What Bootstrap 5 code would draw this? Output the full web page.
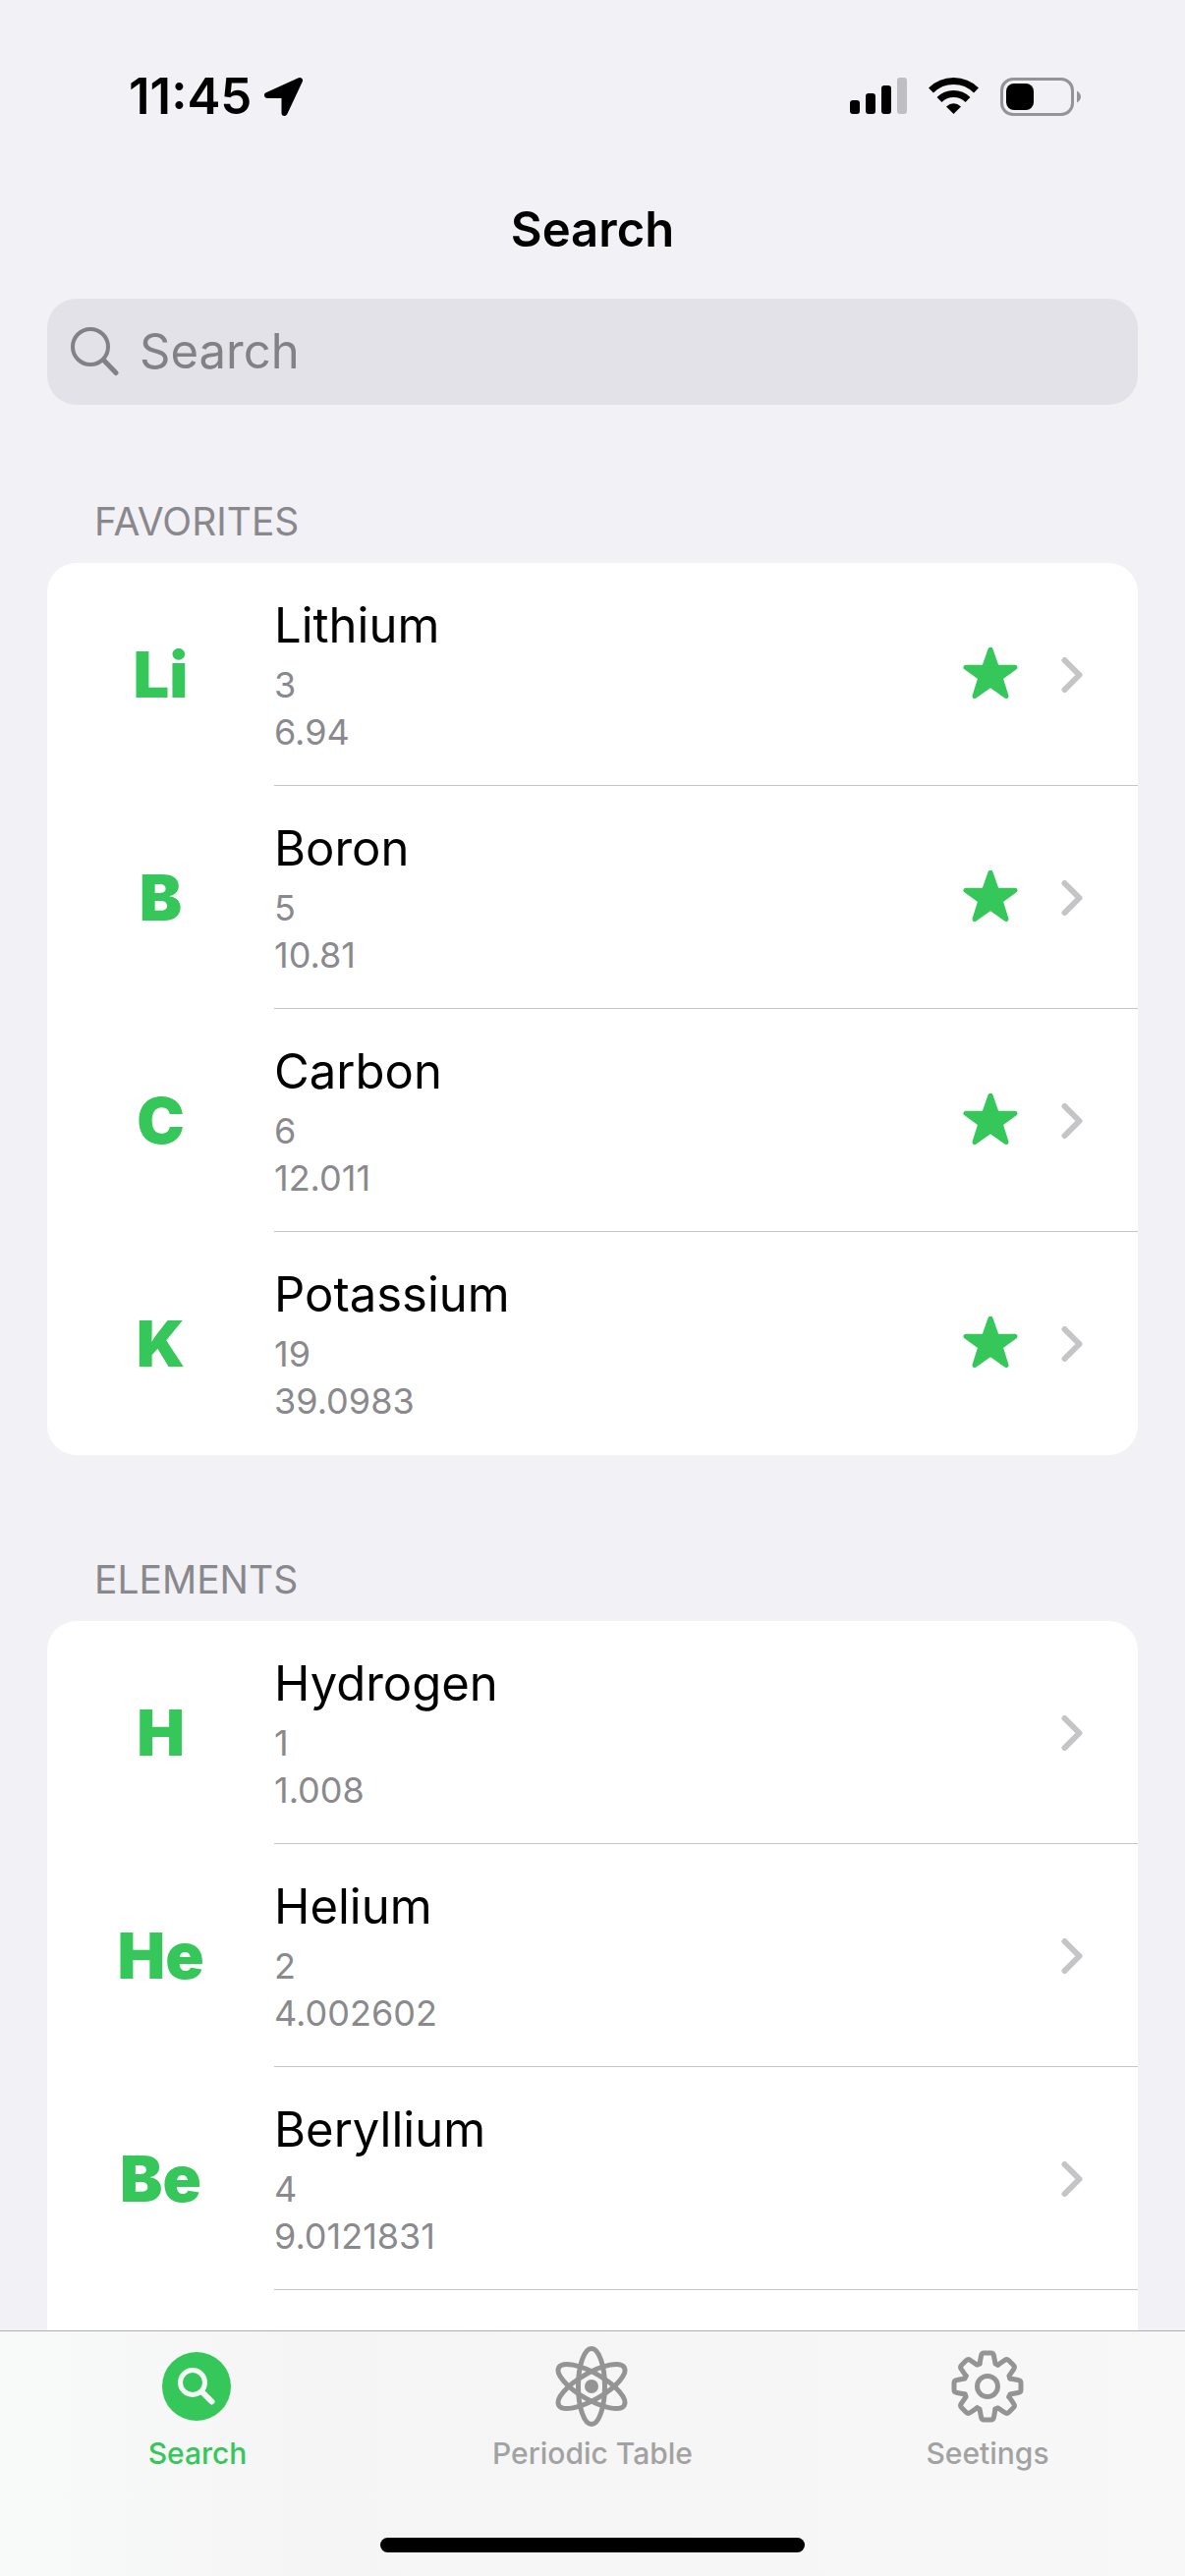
<!DOCTYPE html>
<html lang="en">
<head>
<meta charset="utf-8">
<meta name="viewport" content="width=device-width, initial-scale=1">
<title>Search</title>
<link href="https://cdn.jsdelivr.net/npm/bootstrap@5.3.0/dist/css/bootstrap.min.css" rel="stylesheet">
<style>
  :root { --tint: #35c759; --page: #f2f1f6; --label-gray: #8a8a8e; --gutter: 48px; }
  body { background: var(--page); color: #000; font-family: Inter, "Liberation Sans", sans-serif; font-size: 49px; line-height: 64px; }
  svg { display: block; flex: none; }
  .status-bar { padding: 66px 106px 0 131px; height: 196px; }
  .status-time { font-size: 51px; line-height: 64px; font-weight: 600; }
  .status-left { gap: 13px; }
  .status-right { height: 64px; gap: 22px; }
  .page-title { font-size: 49px; line-height: 76px; font-weight: 600; padding-bottom: 32px; }
  .search-field { margin: 0 var(--gutter); height: 108px; padding: 0 24px; gap: 20px; border-radius: 30px; background: #e3e2e8; color: #828186; }
  .search-field .form-control { font-size: 49px; line-height: 64px; color: #000; }
  .search-field .form-control::placeholder { color: #828186; opacity: 1; }
  .list-area { min-height: 0; }
  .section-title { font-size: 39px; line-height: 52px; font-weight: 400; color: #89888d; margin: 0; padding: 93px 96px 16px; }
  .element-list + .section-title { padding-top: 101px; }
  .element-list { margin: 0 var(--gutter); border-radius: 30px; background: #fff; overflow: hidden; }
  .element-list.runs-on { border-radius: 30px 30px 0 0; }
  .element-row { color: #000; }
  .symbol-cell { width: 231px; font-size: 65px; line-height: 76px; font-weight: 900; color: var(--tint); }
  .detail-cell { border-bottom: 1px solid #c5c5c7; padding: 32px 56px 30px 0; gap: 44px; }
  .ends-here .element-row:last-child .detail-cell { border-bottom-color: transparent; }
  .element-name { font-size: 49px; line-height: 64px; margin-bottom: 4px; }
  .element-data { font-size: 36px; line-height: 48px; color: var(--label-gray); }
  .fav-star { color: var(--tint); margin-bottom: 4px; }
  .tab-strip { height: 250px; border-top: 1px solid #afafb1; background: linear-gradient(90deg, #f8faf9, #f5f5f5 25%, #f6f6f6 60%, #f8f8f8); }
  .tab-link { font-size: 30px; line-height: 38px; font-weight: 500; color: #a2a2a2; padding-top: 14px; gap: 7px; }
  .tab-link svg { color: #949494; }
  .tab-link.active, .tab-link.active svg { color: var(--tint); }
  .home-bar { width: 432px; height: 15px; margin-bottom: 24px; }
</style>
</head>
<body>
<svg width="0" height="0" class="d-none" aria-hidden="true">
  <symbol id="star" viewBox="0 0 56 54"><path d="M28 3.200 34.400 21.300H53L38.200 32 44 50.500 28 39.300 12 50.500 17.800 32 3 21.300H21.600Z" fill="currentColor" stroke="currentColor" stroke-width="5" stroke-linejoin="round"/></symbol>
  <symbol id="chevron" viewBox="0 0 22 36"><path d="M3.500 3 18.500 18 3.500 33" fill="none" stroke="#c5c5c7" stroke-width="6" stroke-linecap="round" stroke-linejoin="round"/></symbol>
</svg>

<div class="vh-100 d-flex flex-column overflow-hidden">
  <header class="flex-shrink-0">
    <div class="status-bar d-flex justify-content-between align-items-start">
      <div class="status-left d-flex align-items-center">
        <span class="status-time">11:45</span>
        <svg width="39" height="39" viewBox="0 0 39 39" aria-hidden="true"><path d="M36 3 3 18H20.500V36Z" stroke="#000" stroke-width="6" stroke-linejoin="round"/></svg>
      </div>
      <div class="status-right d-flex align-items-center">
        <svg width="58" height="38" viewBox="0 0 58 38" aria-hidden="true"><rect y="23" width="10" height="14" rx="3"/><rect x="16" y="16" width="10" height="21" rx="3"/><rect x="32" y="8" width="10" height="29" rx="3"/><rect x="48" width="10" height="37" rx="3" fill="#bfbec3"/></svg>
        <svg width="51" height="38" viewBox="0 0 51 38" aria-hidden="true"><g fill="none" stroke="#000" stroke-width="7"><path d="M2.500 13A32.600 32.600 0 0 1 48.500 13"/><path d="M11 22.500A20.500 20.500 0 0 1 40 22.500"/></g><path d="M25.500 37 18 29.500Q25.500 23 33 29.500Z"/></svg>
        <svg width="82" height="39" viewBox="0 0 82 39" aria-hidden="true"><rect x="1.500" y="1.500" width="72" height="36" rx="11.500" fill="none" stroke="#949397" stroke-width="3"/><rect x="6" y="6" width="28" height="27" rx="8"/><path d="M78 13.500Q82 16 82 19.500T78 25.500Z" fill="#949397"/></svg>
      </div>
    </div>
    <h1 class="page-title text-center mb-0">Search</h1>
    <label class="search-field d-flex align-items-center">
      <svg width="50" height="50" viewBox="0 0 50 50" aria-hidden="true"><g fill="none" stroke="currentColor" stroke-linecap="round"><circle cx="20" cy="20" r="18" stroke-width="4"/><path d="M33.500 33.500 46 46.500" stroke-width="5"/></g></svg>
      <input type="search" class="form-control border-0 p-0 bg-transparent shadow-none" placeholder="Search" aria-label="Search">
    </label>
  </header>

  <main class="list-area flex-grow-1 d-flex flex-column overflow-hidden">
    <h2 class="section-title">FAVORITES</h2>
    <div class="element-list ends-here flex-shrink-0">
      <a href="#li" class="element-row d-flex text-decoration-none">
        <span class="symbol-cell d-flex align-items-center justify-content-center flex-shrink-0">Li</span>
        <span class="detail-cell d-flex align-items-center flex-grow-1">
          <span class="flex-grow-1"><span class="element-name d-block">Lithium</span><span class="element-data d-block">3</span><span class="element-data d-block">6.94</span></span>
          <svg class="fav-star" width="56" height="54"><use href="#star"/></svg><svg width="22" height="36"><use href="#chevron"/></svg>
        </span>
      </a>
      <a href="#b" class="element-row d-flex text-decoration-none">
        <span class="symbol-cell d-flex align-items-center justify-content-center flex-shrink-0">B</span>
        <span class="detail-cell d-flex align-items-center flex-grow-1">
          <span class="flex-grow-1"><span class="element-name d-block">Boron</span><span class="element-data d-block">5</span><span class="element-data d-block">10.81</span></span>
          <svg class="fav-star" width="56" height="54"><use href="#star"/></svg><svg width="22" height="36"><use href="#chevron"/></svg>
        </span>
      </a>
      <a href="#c" class="element-row d-flex text-decoration-none">
        <span class="symbol-cell d-flex align-items-center justify-content-center flex-shrink-0">C</span>
        <span class="detail-cell d-flex align-items-center flex-grow-1">
          <span class="flex-grow-1"><span class="element-name d-block">Carbon</span><span class="element-data d-block">6</span><span class="element-data d-block">12.011</span></span>
          <svg class="fav-star" width="56" height="54"><use href="#star"/></svg><svg width="22" height="36"><use href="#chevron"/></svg>
        </span>
      </a>
      <a href="#k" class="element-row d-flex text-decoration-none">
        <span class="symbol-cell d-flex align-items-center justify-content-center flex-shrink-0">K</span>
        <span class="detail-cell d-flex align-items-center flex-grow-1">
          <span class="flex-grow-1"><span class="element-name d-block">Potassium</span><span class="element-data d-block">19</span><span class="element-data d-block">39.0983</span></span>
          <svg class="fav-star" width="56" height="54"><use href="#star"/></svg><svg width="22" height="36"><use href="#chevron"/></svg>
        </span>
      </a>
    </div>

    <h2 class="section-title">ELEMENTS</h2>
    <div class="element-list runs-on flex-grow-1">
      <a href="#h" class="element-row d-flex text-decoration-none">
        <span class="symbol-cell d-flex align-items-center justify-content-center flex-shrink-0">H</span>
        <span class="detail-cell d-flex align-items-center flex-grow-1">
          <span class="flex-grow-1"><span class="element-name d-block">Hydrogen</span><span class="element-data d-block">1</span><span class="element-data d-block">1.008</span></span>
          <svg width="22" height="36"><use href="#chevron"/></svg>
        </span>
      </a>
      <a href="#he" class="element-row d-flex text-decoration-none">
        <span class="symbol-cell d-flex align-items-center justify-content-center flex-shrink-0">He</span>
        <span class="detail-cell d-flex align-items-center flex-grow-1">
          <span class="flex-grow-1"><span class="element-name d-block">Helium</span><span class="element-data d-block">2</span><span class="element-data d-block">4.002602</span></span>
          <svg width="22" height="36"><use href="#chevron"/></svg>
        </span>
      </a>
      <a href="#be" class="element-row d-flex text-decoration-none">
        <span class="symbol-cell d-flex align-items-center justify-content-center flex-shrink-0">Be</span>
        <span class="detail-cell d-flex align-items-center flex-grow-1">
          <span class="flex-grow-1"><span class="element-name d-block">Beryllium</span><span class="element-data d-block">4</span><span class="element-data d-block">9.0121831</span></span>
          <svg width="22" height="36"><use href="#chevron"/></svg>
        </span>
      </a>
    </div>
  </main>

  <footer class="tab-strip flex-shrink-0 d-flex flex-column justify-content-between">
    <nav class="nav nav-fill" aria-label="Tabs">
      <a href="#search" class="tab-link active col-4 d-flex flex-column align-items-center text-decoration-none" aria-current="page">
        <svg width="84" height="84" viewBox="-41 -42 84 84" aria-hidden="true"><circle r="35" fill="currentColor"/><g fill="none" stroke="#f6f8f7" stroke-width="5" stroke-linecap="round"><circle cx="-4" cy="-4" r="12.500"/><path d="M6 6 15.500 15.500" stroke-width="6"/></g></svg>
        <span>Search</span>
      </a>
      <a href="#table" class="tab-link col-4 d-flex flex-column align-items-center text-decoration-none">
        <svg width="84" height="84" viewBox="-41 -42 84 84" aria-hidden="true"><g fill="none" stroke="currentColor" stroke-width="5"><ellipse rx="13.500" ry="38.500"/><ellipse rx="13.500" ry="38.500" transform="rotate(60)"/><ellipse rx="13.500" ry="38.500" transform="rotate(-60)"/></g><circle r="7" fill="currentColor"/></svg>
        <span>Periodic Table</span>
      </a>
      <a href="#settings" class="tab-link col-4 d-flex flex-column align-items-center text-decoration-none">
        <svg width="84" height="84" viewBox="-42 -42 84 84" aria-hidden="true"><defs><path id="tooth" d="M-8-23-6.500-31Q-6-34-3.500-34H3.500Q6-34 6.500-31L8-23 10.600-21.900"/></defs><g fill="none" stroke="currentColor" stroke-width="5" stroke-linecap="round" stroke-linejoin="round"><circle r="10.500"/><use href="#tooth"/><use href="#tooth" transform="rotate(45)"/><use href="#tooth" transform="rotate(90)"/><use href="#tooth" transform="rotate(135)"/><use href="#tooth" transform="rotate(180)"/><use href="#tooth" transform="rotate(225)"/><use href="#tooth" transform="rotate(270)"/><use href="#tooth" transform="rotate(315)"/></g></svg>
        <span>Seetings</span>
      </a>
    </nav>
    <div class="home-bar bg-black rounded-pill mx-auto"></div>
  </footer>
</div>
<script src="https://cdn.jsdelivr.net/npm/bootstrap@5.3.0/dist/js/bootstrap.bundle.min.js"></script>
</body>
</html>
